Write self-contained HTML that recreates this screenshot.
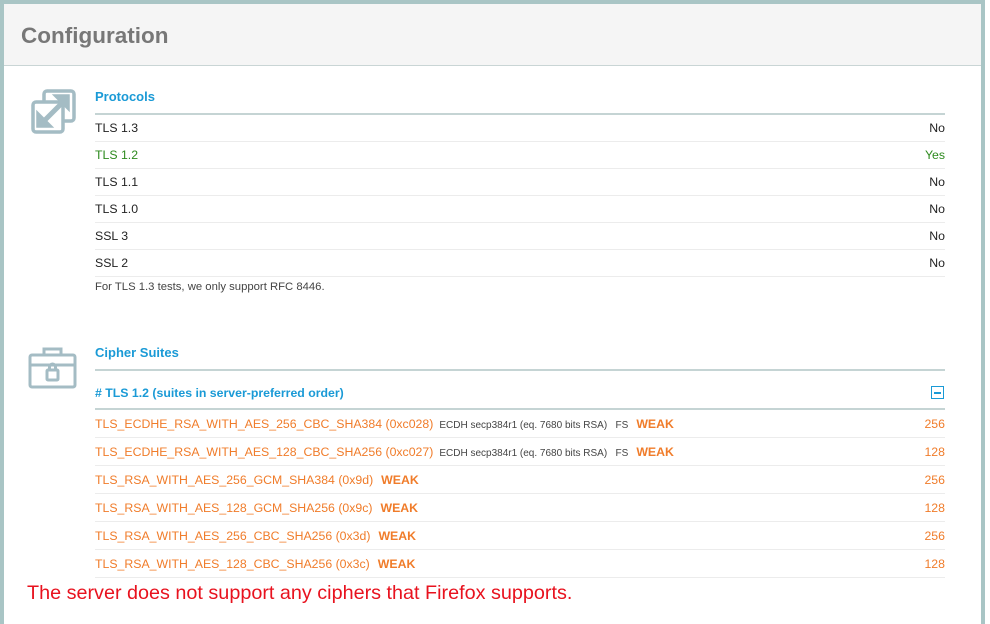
<!DOCTYPE html>
<html><head><style>
body{margin:0;width:990px;height:611px;overflow:hidden;background:#fff;font-family:"Liberation Sans",Arial,sans-serif;}
.frame{position:absolute;left:0;top:0;width:977px;height:620px;border:4px solid #a9c5c5;border-bottom:none;background:#fff;}
.hdr{position:absolute;left:0;top:0;width:977px;height:61px;background:#f5f5f5;border-bottom:1px solid #c9d5d5;}
.hdr h1{margin:0;position:absolute;left:17px;top:19px;font-size:22.5px;font-weight:bold;color:#777;}
.sec{position:absolute;left:91px;width:850px;}
.title{font-size:13px;font-weight:bold;color:#1a9ad6;height:26px;border-bottom:2px solid #c5d4d4;box-sizing:border-box;padding-top:0;}
.row{height:26px;border-bottom:1px solid #ececec;font-size:12.3px;color:#222;display:flex;justify-content:space-between;align-items:center;}
.row.c{height:27px;color:#f07c2a;}
.sm{font-size:10px;color:#444;margin-left:6px;}
.weak{font-weight:bold;color:#f07c2a;margin-left:8px;}
</style></head><body>
<div class="frame">
<div class="hdr"><h1>Configuration</h1></div>
<svg style="position:absolute;left:26px;top:84px" width="48" height="48" viewBox="0 0 48 48" fill="none" stroke="#a4bcc4" stroke-width="3.5"><rect x="14" y="3" width="30" height="30" rx="3"/><rect x="3" y="14" width="30" height="30" rx="3" fill="#fff"/><path d="M10 37L37 10" stroke-width="5"/><path d="M26 8h12v12z" fill="#a4bcc4"/><path d="M8 26v12h12z" fill="#a4bcc4"/></svg>
<svg style="position:absolute;left:24px;top:341px" width="50" height="44" viewBox="0 0 50 44" fill="none" stroke="#a4bcc4" stroke-width="3"><rect x="2" y="10" width="45" height="32" rx="2"/><path d="M16 10V4h17v6M2 20h45"/><rect x="19" y="25" width="11" height="10" rx="1"/><path d="M21.5 25v-3a3 3 0 0 1 6 0v3"/></svg>
<div class="sec" style="top:85px">
<div class="title">Protocols</div>
<div class="row"><span>TLS 1.3</span><span>No</span></div>
<div class="row" style="color:#2d8a1e"><span>TLS 1.2</span><span>Yes</span></div>
<div class="row"><span>TLS 1.1</span><span>No</span></div>
<div class="row"><span>TLS 1.0</span><span>No</span></div>
<div class="row"><span>SSL 3</span><span>No</span></div>
<div class="row"><span>SSL 2</span><span>No</span></div>
<div style="font-size:11.3px;color:#444;margin-top:4px">For TLS 1.3 tests, we only support RFC 8446.</div>
</div>
<div class="sec" style="top:341px">
<div class="title">Cipher Suites</div>
<div style="height:39px;padding-top:6px;border-bottom:2px solid #c5d4d4;box-sizing:border-box;font-size:12.3px;font-weight:bold;color:#1a9ad6;display:flex;justify-content:space-between;align-items:center"><span># TLS 1.2 (suites in server-preferred order)</span><span style="width:11px;height:11px;border:1px solid #1a9ad6;position:relative;margin-right:1px"><span style="position:absolute;left:2px;top:5px;width:7px;height:2px;background:#1a9ad6"></span></span></div>
<div class="row c"><span>TLS_ECDHE_RSA_WITH_AES_256_CBC_SHA384 (0xc028)<span class="sm">ECDH secp384r1 (eq. 7680 bits RSA)&nbsp;&nbsp; FS</span><span class="weak">WEAK</span></span><span>256</span></div>
<div class="row c"><span>TLS_ECDHE_RSA_WITH_AES_128_CBC_SHA256 (0xc027)<span class="sm">ECDH secp384r1 (eq. 7680 bits RSA)&nbsp;&nbsp; FS</span><span class="weak">WEAK</span></span><span>128</span></div>
<div class="row c"><span>TLS_RSA_WITH_AES_256_GCM_SHA384 (0x9d)<span class="weak">WEAK</span></span><span>256</span></div>
<div class="row c"><span>TLS_RSA_WITH_AES_128_GCM_SHA256 (0x9c)<span class="weak">WEAK</span></span><span>128</span></div>
<div class="row c"><span>TLS_RSA_WITH_AES_256_CBC_SHA256 (0x3d)<span class="weak">WEAK</span></span><span>256</span></div>
<div class="row c"><span>TLS_RSA_WITH_AES_128_CBC_SHA256 (0x3c)<span class="weak">WEAK</span></span><span>128</span></div>
</div>
<div style="position:absolute;left:23px;top:578px;font-size:19.8px;color:#e8121e">The server does not support any ciphers that Firefox supports.</div>
</div>
</body></html>
